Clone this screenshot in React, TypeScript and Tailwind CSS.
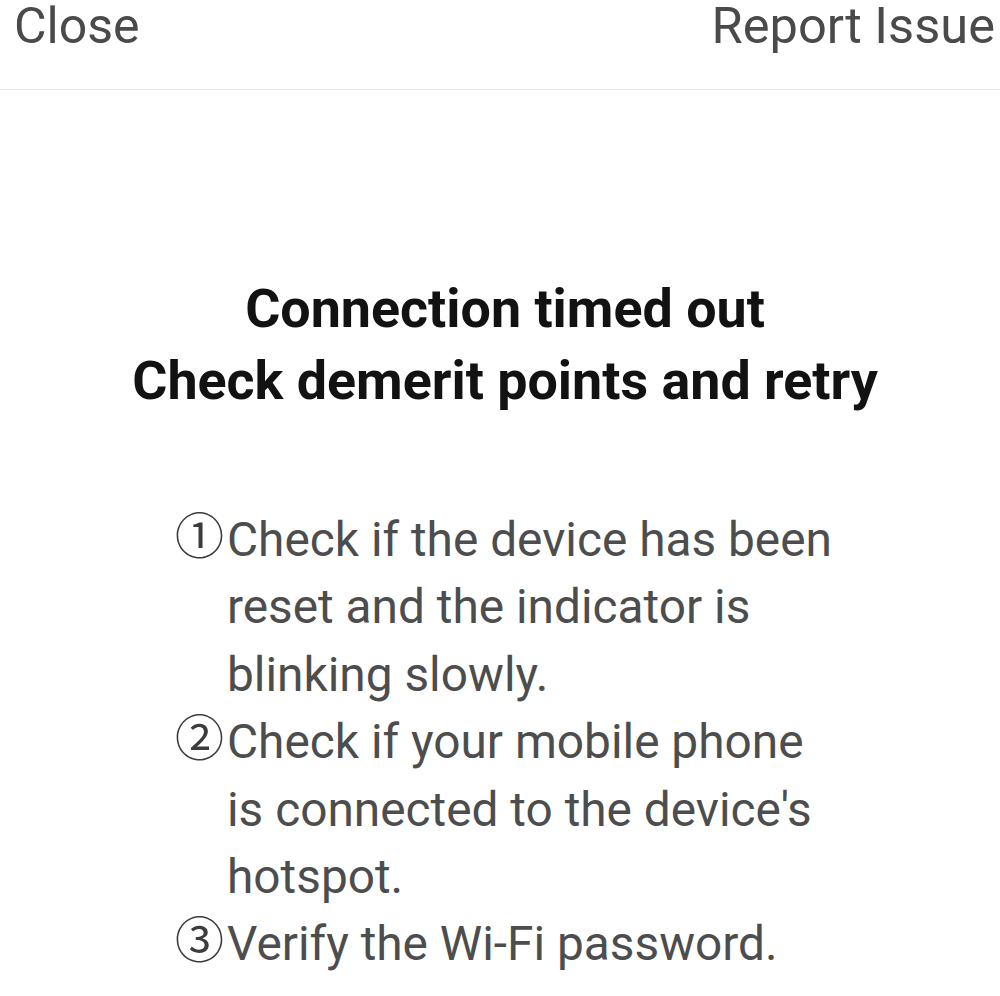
import React from 'react';

const steps = [
    { mark: '①', text: 'Check if the device has been reset and the indicator is blinking slowly.' },
    { mark: '②', text: "Check if your mobile phone is connected to the device's hotspot." },
    { mark: '③', text: 'Verify the Wi-Fi password.' },
];

export default function App() {
    return (
        <div className="min-h-[996px] w-[1000px] bg-white font-['Roboto',sans-serif]">
            {/* top bar */}
            <div className="flex h-[90px] items-start justify-between border-b border-[#e6e6e6] pl-[14px] pr-[5px]">
                <button className="text-[50px] leading-[52px] text-[#4a4a4a]">Close</button>
                <button className="text-[50.6px] leading-[52px] text-[#4a4a4a]">Report Issue</button>
            </div>

            <div className="mt-[183px] pl-[10px] text-center text-[53.8px] font-bold leading-[72px] text-[#121212]">
                <div>Connection timed out</div>
                <div>Check demerit points and retry</div>
            </div>

            <div className="ml-[175px] mt-[90px] w-[670px]">
                {steps.map(step => (
                    <div key={step.mark} className="flex items-start text-[47.8px] leading-[67.4px] text-[#4d4d4d]">
                        <span className="w-[52px] shrink-0 font-['Noto_Sans_CJK_SC',sans-serif] text-[49px] leading-[51px] text-[#3c3c3c]">
                            {step.mark}
                        </span>
                        <span className="w-[615px]">{step.text}</span>
                    </div>
                ))}
            </div>
        </div>
    );
}
